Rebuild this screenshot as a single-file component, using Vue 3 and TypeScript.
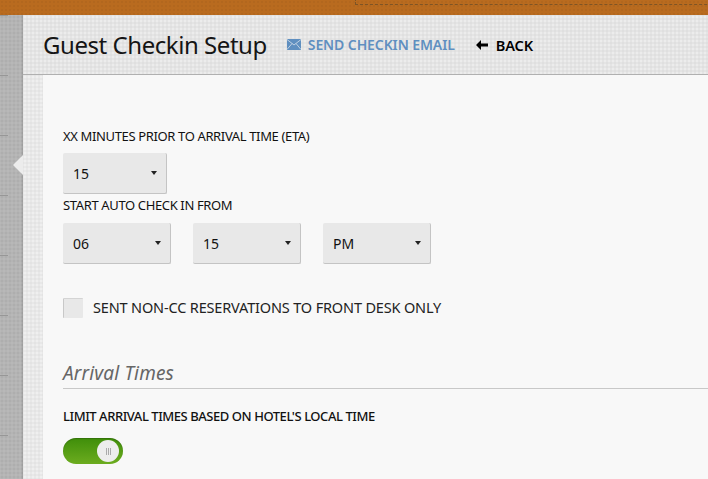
<template>
  <div class="page">
    <div class="topbar">
      <div class="dashed-box"></div>
    </div>
    <div class="body">
      <aside class="rail"><span class="notch"></span></aside>
      <main class="main">
        <header class="head">
          <h1>Guest Checkin Setup</h1>
          <a class="link email">
            <svg width="14" height="11" viewBox="0 0 14 11">
              <rect width="14" height="11" fill="#5f8fc0" />
              <path d="M0 .5 7 6l7-5.5M0 10.5 5 4.5M14 10.5 9 4.5" fill="none" stroke="#d5e0ea" stroke-width=".8" />
            </svg>
            SEND CHECKIN EMAIL
          </a>
          <a class="link back">
            <svg width="12" height="10" viewBox="0 0 12 10"><path d="M5 0v3.6h7v2.8H5V10L0 5z" fill="#000" /></svg>
            BACK
          </a>
        </header>
        <div class="lower">
          <div class="strip"></div>
          <section class="content">
            <label class="field-label first">XX MINUTES PRIOR TO ARRIVAL TIME (ETA)</label>
            <div class="select narrow">15<i class="caret"></i></div>
            <label class="field-label second">START AUTO CHECK IN FROM</label>
            <div class="select-row">
              <div v-for="v in timeParts" :key="v" class="select">{{ v }}<i class="caret"></i></div>
            </div>
            <div class="check-row">
              <span class="checkbox"></span>
              <span class="check-text">SENT NON-CC RESERVATIONS TO FRONT DESK ONLY</span>
            </div>
            <h2>Arrival Times</h2>
            <label class="field-label third">LIMIT ARRIVAL TIMES BASED ON HOTEL'S LOCAL TIME</label>
            <div class="toggle">
              <span class="knob"><b></b><b></b><b></b></span>
            </div>
          </section>
        </div>
      </main>
    </div>
  </div>
</template>

<script setup lang="ts">
const timeParts: string[] = ['06', '15', 'PM']
</script>

<style>
html, body { margin: 0; overflow: hidden; }
</style>

<style scoped>
.page {
  width: 708px;
  height: 479px;
  overflow: hidden;
  display: flex;
  flex-direction: column;
  font-family: "Noto Sans", "Open Sans", sans-serif;
  color: #111;
}

.topbar {
  height: 15px;
  flex: none;
  background: #b96b1f;
  background-image: radial-gradient(rgba(0, 0, 0, .04) 1px, transparent 1.5px);
  background-size: 4px 4px;
  position: relative;
}

.dashed-box {
  position: absolute;
  left: 355px;
  top: -10px;
  width: 400px;
  height: 13px;
  border: 1px dashed #7d5426;
}

.body { flex: 1; display: flex; min-height: 0; }

.rail {
  width: 23px;
  flex: none;
  position: relative;
  background-color: #b4b4b4;
  background-image:
    linear-gradient(to bottom, #979797 1px, transparent 1px),
    linear-gradient(to right, transparent 21px, rgba(0, 0, 0, .12) 23px),
    radial-gradient(rgba(0, 0, 0, .035) 1px, transparent 1.5px),
    radial-gradient(rgba(255, 255, 255, .05) 1px, transparent 1.5px);
  background-size: 8px 60px, 23px 100%, 4px 4px, 4px 4px;
  background-repeat: repeat-y, no-repeat, repeat, repeat;
  background-position: 0 0, 0 0, 0 0, 2px 2px;
}

.notch {
  position: absolute;
  right: 0;
  top: 140px;
  width: 0;
  height: 0;
  border-top: 10px solid transparent;
  border-bottom: 10px solid transparent;
  border-right: 10px solid #ececec;
}

.main { flex: 1; display: flex; flex-direction: column; min-width: 0; }

.head {
  height: 60px;
  flex: none;
  box-sizing: border-box;
  padding: 0 0 0 20px;
  display: flex;
  align-items: center;
  background-color: #e4e4e4;
  background-image:
    radial-gradient(rgba(255, 255, 255, .28) 1px, transparent 1.5px),
    radial-gradient(rgba(0, 0, 0, .025) 1px, transparent 1.5px);
  background-size: 4px 4px, 4px 4px;
  background-position: 0 0, 2px 2px;
  border-bottom: 1px solid #b0b0b0;
}

h1 {
  margin: 0 20px 0 0;
  font-size: 24px;
  font-weight: 400;
  letter-spacing: -.45px;
  line-height: 30px;
  color: #151515;
}

.link {
  display: flex;
  align-items: center;
  gap: 7px;
  font-size: 14px;
  font-weight: 600;
  letter-spacing: -.1px;
}

.email { color: #5f8fc0; margin-right: 21px; }
.back { color: #000; gap: 8px; font-size: 14.5px; }

.lower { flex: 1; display: flex; min-height: 0; }

.strip {
  width: 20px;
  flex: none;
  background-color: #e8e8e8;
  background-image:
    radial-gradient(rgba(255, 255, 255, .3) 1px, transparent 1.5px),
    radial-gradient(rgba(0, 0, 0, .02) 1px, transparent 1.5px);
  background-size: 4px 4px, 4px 4px;
  background-position: 0 0, 2px 2px;
}

.content {
  flex: 1;
  background: #f8f8f8;
  padding: 0 0 0 20px;
  min-width: 0;
}

.field-label {
  display: block;
  font-size: 13px;
  line-height: 16px;
  color: #111;
  letter-spacing: -.36px;
}

.first { margin-top: 53px; margin-bottom: 9px; }
.second { margin-top: 3px; margin-bottom: 10px; }
.third { margin-top: 19px; margin-bottom: 14px; font-weight: 500; letter-spacing: -.45px; }

.select-row { display: flex; gap: 22px; }

.select {
  width: 108px;
  height: 41px;
  box-sizing: border-box;
  padding-left: 10px;
  display: flex;
  align-items: center;
  position: relative;
  background: #e8e8e8;
  border-radius: 2px;
  border-right: 1px solid #c4c4c4;
  border-bottom: 1px solid #c4c4c4;
  font-size: 14px;
}

.narrow { width: 104px; }

.caret {
  position: absolute;
  right: 9px;
  top: 18px;
  width: 0;
  height: 0;
  border-left: 3px solid transparent;
  border-right: 3px solid transparent;
  border-top: 4px solid #222;
}

.check-row {
  display: flex;
  align-items: center;
  gap: 10px;
  margin-top: 34px;
  font-size: 14.5px;
  letter-spacing: -.16px;
  color: #222;
}

.check-text { transform: translateY(-1px); }

.checkbox {
  width: 19px;
  height: 19px;
  background: #e8e8e8;
  border-left: 1px solid #c8c8c8;
  border-top: 1px solid #d4d4d4;
  border-radius: 1px;
}

h2 {
  margin: 42px 0 0;
  font-size: 19px;
  font-weight: 400;
  font-style: italic;
  letter-spacing: .15px;
  line-height: 26px;
  color: #666;
  border-bottom: 1px solid #c8c8c8;
  padding-bottom: 2px;
}

.toggle {
  width: 60px;
  height: 26px;
  box-sizing: border-box;
  padding: 2px 4px 0 0;
  border-radius: 13px;
  background: linear-gradient(#3f8e0a, #6cac1f);
  box-shadow: inset 0 1px 1px rgba(0, 0, 0, .2);
  display: flex;
  justify-content: flex-end;
}

.knob {
  width: 22px;
  height: 22px;
  border-radius: 50%;
  background: #ededed;
  display: flex;
  align-items: center;
  justify-content: center;
  gap: 1px;
}

.knob b { width: 1px; height: 7px; background: #aaa; }
</style>
